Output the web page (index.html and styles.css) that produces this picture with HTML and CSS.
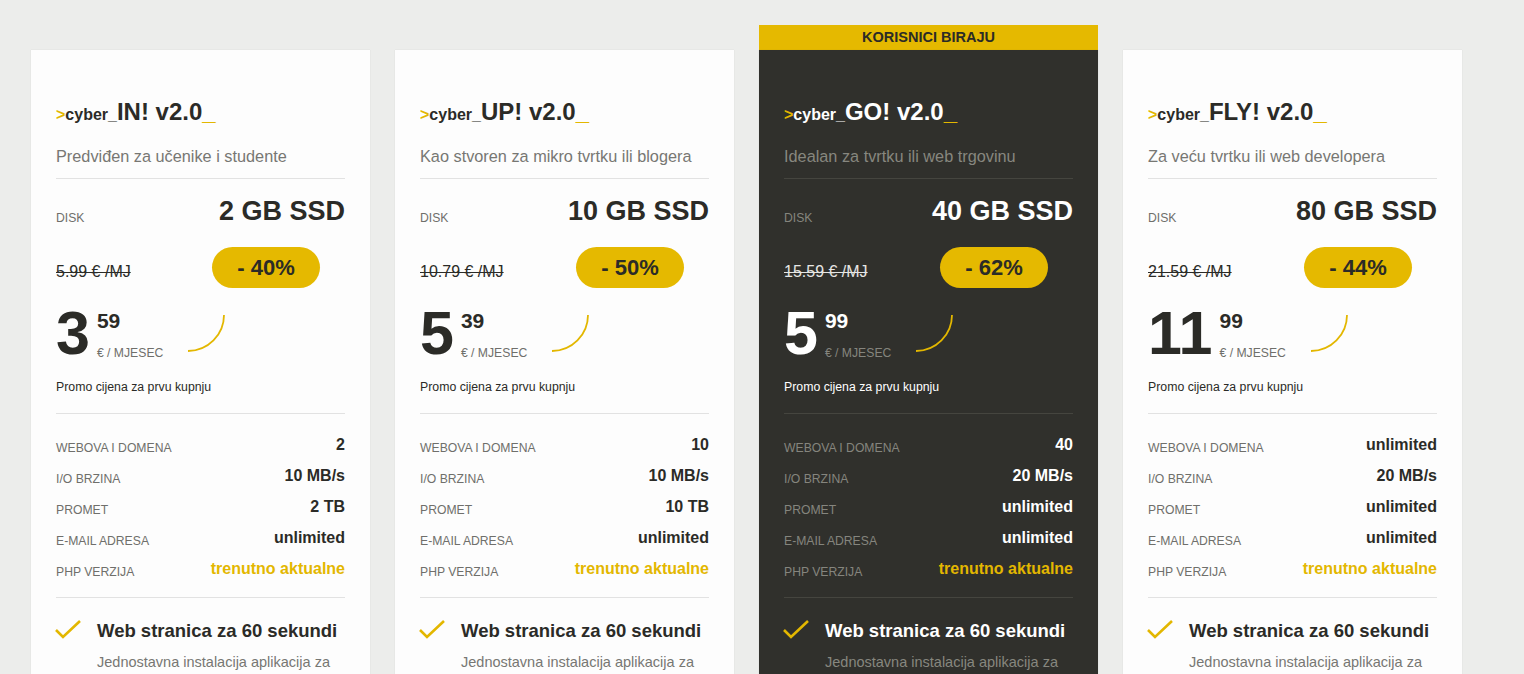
FILE: index.html
```html
<!DOCTYPE html>
<html lang="hr">
<head>
<meta charset="utf-8">
<title>Cyber hosting paketi</title>
<link rel="stylesheet" href="styles.css">
</head>
<body>
<div class="plans">

  <div class="col">
    <div class="card">
      <div class="head">
        <h2 class="name"><span class="gt">&gt;</span><span class="cy">cyber_</span>IN! v2.0<span class="us">_</span></h2>
        <p class="sub">Predviđen za učenike i studente</p>
      </div>
      <div class="disk"><span class="lbl dl">DISK</span><span class="disk-val">2 GB SSD</span></div>
      <div class="old-row"><span class="old">5.99 € /MJ</span><span class="badge">- 40%</span></div>
      <div class="price">
        <span class="big">3</span>
        <div class="cents"><span class="c">59</span><span class="per">€ / MJESEC</span></div>
        <svg class="arc" width="38" height="37" viewBox="0 0 38 37"><path d="M37 0 A36 36 0 0 1 1 36" fill="none" stroke="#e3b700" stroke-width="1.8"/></svg>
      </div>
      <p class="promo">Promo cijena za prvu kupnju</p>
      <ul class="feats">
        <li><span class="lbl">WEBOVA I DOMENA</span><span class="val">2</span></li>
        <li><span class="lbl">I/O BRZINA</span><span class="val">10 MB/s</span></li>
        <li><span class="lbl">PROMET</span><span class="val">2 TB</span></li>
        <li><span class="lbl">E-MAIL ADRESA</span><span class="val">unlimited</span></li>
        <li><span class="lbl">PHP VERZIJA</span><span class="val hl">trenutno aktualne</span></li>
      </ul>
      <div class="perk">
        <svg class="chk" width="26" height="20" viewBox="0 0 26 20"><polyline points="1,11 8,18 25,2" fill="none" stroke="#e3b700" stroke-width="2.6"/></svg>
        <div><h3 class="perk-t">Web stranica za 60 sekundi</h3><p class="perk-d">Jednostavna instalacija aplikacija za izradu web stranica i trgovina</p></div>
      </div>
    </div>
  </div>

  <div class="col">
    <div class="card">
      <div class="head">
        <h2 class="name"><span class="gt">&gt;</span><span class="cy">cyber_</span>UP! v2.0<span class="us">_</span></h2>
        <p class="sub">Kao stvoren za mikro tvrtku ili blogera</p>
      </div>
      <div class="disk"><span class="lbl dl">DISK</span><span class="disk-val">10 GB SSD</span></div>
      <div class="old-row"><span class="old">10.79 € /MJ</span><span class="badge">- 50%</span></div>
      <div class="price">
        <span class="big">5</span>
        <div class="cents"><span class="c">39</span><span class="per">€ / MJESEC</span></div>
        <svg class="arc" width="38" height="37" viewBox="0 0 38 37"><path d="M37 0 A36 36 0 0 1 1 36" fill="none" stroke="#e3b700" stroke-width="1.8"/></svg>
      </div>
      <p class="promo">Promo cijena za prvu kupnju</p>
      <ul class="feats">
        <li><span class="lbl">WEBOVA I DOMENA</span><span class="val">10</span></li>
        <li><span class="lbl">I/O BRZINA</span><span class="val">10 MB/s</span></li>
        <li><span class="lbl">PROMET</span><span class="val">10 TB</span></li>
        <li><span class="lbl">E-MAIL ADRESA</span><span class="val">unlimited</span></li>
        <li><span class="lbl">PHP VERZIJA</span><span class="val hl">trenutno aktualne</span></li>
      </ul>
      <div class="perk">
        <svg class="chk" width="26" height="20" viewBox="0 0 26 20"><polyline points="1,11 8,18 25,2" fill="none" stroke="#e3b700" stroke-width="2.6"/></svg>
        <div><h3 class="perk-t">Web stranica za 60 sekundi</h3><p class="perk-d">Jednostavna instalacija aplikacija za izradu web stranica i trgovina</p></div>
      </div>
    </div>
  </div>

  <div class="col featured">
    <div class="ribbon">KORISNICI BIRAJU</div>
    <div class="card dark">
      <div class="head">
        <h2 class="name"><span class="gt">&gt;</span><span class="cy">cyber_</span>GO! v2.0<span class="us">_</span></h2>
        <p class="sub">Idealan za tvrtku ili web trgovinu</p>
      </div>
      <div class="disk"><span class="lbl dl">DISK</span><span class="disk-val">40 GB SSD</span></div>
      <div class="old-row"><span class="old">15.59 € /MJ</span><span class="badge">- 62%</span></div>
      <div class="price">
        <span class="big">5</span>
        <div class="cents"><span class="c">99</span><span class="per">€ / MJESEC</span></div>
        <svg class="arc" width="38" height="37" viewBox="0 0 38 37"><path d="M37 0 A36 36 0 0 1 1 36" fill="none" stroke="#e3b700" stroke-width="1.8"/></svg>
      </div>
      <p class="promo">Promo cijena za prvu kupnju</p>
      <ul class="feats">
        <li><span class="lbl">WEBOVA I DOMENA</span><span class="val">40</span></li>
        <li><span class="lbl">I/O BRZINA</span><span class="val">20 MB/s</span></li>
        <li><span class="lbl">PROMET</span><span class="val">unlimited</span></li>
        <li><span class="lbl">E-MAIL ADRESA</span><span class="val">unlimited</span></li>
        <li><span class="lbl">PHP VERZIJA</span><span class="val hl">trenutno aktualne</span></li>
      </ul>
      <div class="perk">
        <svg class="chk" width="26" height="20" viewBox="0 0 26 20"><polyline points="1,11 8,18 25,2" fill="none" stroke="#e3b700" stroke-width="2.6"/></svg>
        <div><h3 class="perk-t">Web stranica za 60 sekundi</h3><p class="perk-d">Jednostavna instalacija aplikacija za izradu web stranica i trgovina</p></div>
      </div>
    </div>
  </div>

  <div class="col">
    <div class="card">
      <div class="head">
        <h2 class="name"><span class="gt">&gt;</span><span class="cy">cyber_</span>FLY! v2.0<span class="us">_</span></h2>
        <p class="sub">Za veću tvrtku ili web developera</p>
      </div>
      <div class="disk"><span class="lbl dl">DISK</span><span class="disk-val">80 GB SSD</span></div>
      <div class="old-row"><span class="old">21.59 € /MJ</span><span class="badge">- 44%</span></div>
      <div class="price">
        <span class="big">11</span>
        <div class="cents"><span class="c">99</span><span class="per">€ / MJESEC</span></div>
        <svg class="arc" width="38" height="37" viewBox="0 0 38 37"><path d="M37 0 A36 36 0 0 1 1 36" fill="none" stroke="#e3b700" stroke-width="1.8"/></svg>
      </div>
      <p class="promo">Promo cijena za prvu kupnju</p>
      <ul class="feats">
        <li><span class="lbl">WEBOVA I DOMENA</span><span class="val">unlimited</span></li>
        <li><span class="lbl">I/O BRZINA</span><span class="val">20 MB/s</span></li>
        <li><span class="lbl">PROMET</span><span class="val">unlimited</span></li>
        <li><span class="lbl">E-MAIL ADRESA</span><span class="val">unlimited</span></li>
        <li><span class="lbl">PHP VERZIJA</span><span class="val hl">trenutno aktualne</span></li>
      </ul>
      <div class="perk">
        <svg class="chk" width="26" height="20" viewBox="0 0 26 20"><polyline points="1,11 8,18 25,2" fill="none" stroke="#e3b700" stroke-width="2.6"/></svg>
        <div><h3 class="perk-t">Web stranica za 60 sekundi</h3><p class="perk-d">Jednostavna instalacija aplikacija za izradu web stranica i trgovina</p></div>
      </div>
    </div>
  </div>

</div>
</body>
</html>
```

FILE: styles.css
```css
* { box-sizing: border-box; }
html, body { margin: 0; padding: 0; }
body {
  background: #ecedeb;
  font-family: "Liberation Sans", Arial, sans-serif;
  color: #2b2b27;
}
.plans {
  display: flex;
  align-items: flex-start;
  gap: 25px;
  padding: 25px 0 40px 31px;
}
.col {
  width: 339px;
  flex: 0 0 339px;
  padding-top: 25px;
}
.col.featured { padding-top: 0; }
.ribbon {
  height: 25px;
  background: #e5b900;
  color: #2b2b27;
  font-weight: bold;
  font-size: 14.5px;
  line-height: 25px;
  text-align: center;
}
.card {
  background: #fdfdfd;
  padding: 47px 25px 40px;
  box-shadow: 0 0 1px rgba(0,0,0,0.12);
}
.card.dark {
  background: #30302c;
  color: #ffffff;
}
.head {
  border-bottom: 1px solid #e2e2e2;
  padding-bottom: 11px;
}
.name {
  margin: 0;
  font-size: 24px;
  line-height: 30px;
  font-weight: bold;
  white-space: nowrap;
}
.gt { color: #e3b700; font-size: 16px; }
.cy { font-size: 16px; }
.us { color: #e3b700; }
.sub {
  margin: 15px 0 0;
  font-size: 16.3px;
  line-height: 22px;
  color: #777773;
}
.dark .sub { color: #87877f; }
.dark .head { border-bottom-color: #45453f; }

.disk {
  display: flex;
  justify-content: space-between;
  align-items: baseline;
  margin-top: 16px;
}
.lbl {
  font-size: 12.2px;
  color: #6f6f6b;
  text-transform: uppercase;
}
.dl {
  position: relative;
  top: 2px;
}
.dark .lbl { color: #85857e; }
.disk-val {
  font-size: 27px;
  line-height: 32px;
  font-weight: bold;
}
.old-row {
  display: flex;
  justify-content: space-between;
  align-items: center;
  margin-top: 20px;
  padding-right: 25px;
}
.old {
  font-size: 16px;
  text-decoration: line-through;
  color: #2b2b27;
  margin-top: 9px;
}
.dark .old { color: #e6e6e4; }
.badge {
  width: 108px;
  height: 41px;
  border-radius: 21px;
  background: #e5b900;
  color: #2b2b27;
  font-weight: bold;
  font-size: 22px;
  line-height: 41px;
  text-align: center;
}
.price {
  display: flex;
  align-items: flex-start;
  margin-top: 19px;
}
.big {
  font-size: 61px;
  line-height: 52px;
  font-weight: bold;
}
.cents {
  display: flex;
  flex-direction: column;
  margin-left: 7px;
  margin-top: 3px;
}
.c {
  font-size: 21px;
  line-height: 21px;
  font-weight: bold;
}
.per {
  font-size: 12.2px;
  line-height: 16px;
  margin-top: 14px;
  color: #6f6f6b;
}
.dark .per { color: #85857e; }
.arc {
  display: block;
  margin-left: 24px;
  margin-top: 8px;
}
.promo {
  margin: 17px 0 0;
  font-size: 12.3px;
  line-height: 18px;
  padding-bottom: 17px;
  border-bottom: 1px solid #e2e2e2;
}
.dark .promo { border-bottom-color: #45453f; }
.feats {
  list-style: none;
  margin: 0;
  padding: 17px 0 11px;
  border-bottom: 1px solid #e2e2e2;
}
.dark .feats { border-bottom-color: #45453f; }
.feats li {
  display: flex;
  justify-content: space-between;
  align-items: baseline;
  height: 31px;
}
.val {
  font-size: 16px;
  line-height: 31px;
  font-weight: bold;
  position: relative;
  top: -2px;
}
.val.hl { color: #e3b700; }
.perk {
  display: flex;
  align-items: flex-start;
  padding-top: 21px;
}
.chk {
  display: block;
  flex: 0 0 26px;
  margin-top: 0;
  margin-left: -1px;
}
.perk > div { margin-left: 16px; }
.perk-t {
  margin: 0;
  font-size: 18.5px;
  line-height: 24px;
  font-weight: bold;
  white-space: nowrap;
}
.perk-d {
  margin: 9px 0 0;
  font-size: 14.5px;
  line-height: 20px;
  color: #777773;
}
.dark .perk-d { color: #87877f; }
```
